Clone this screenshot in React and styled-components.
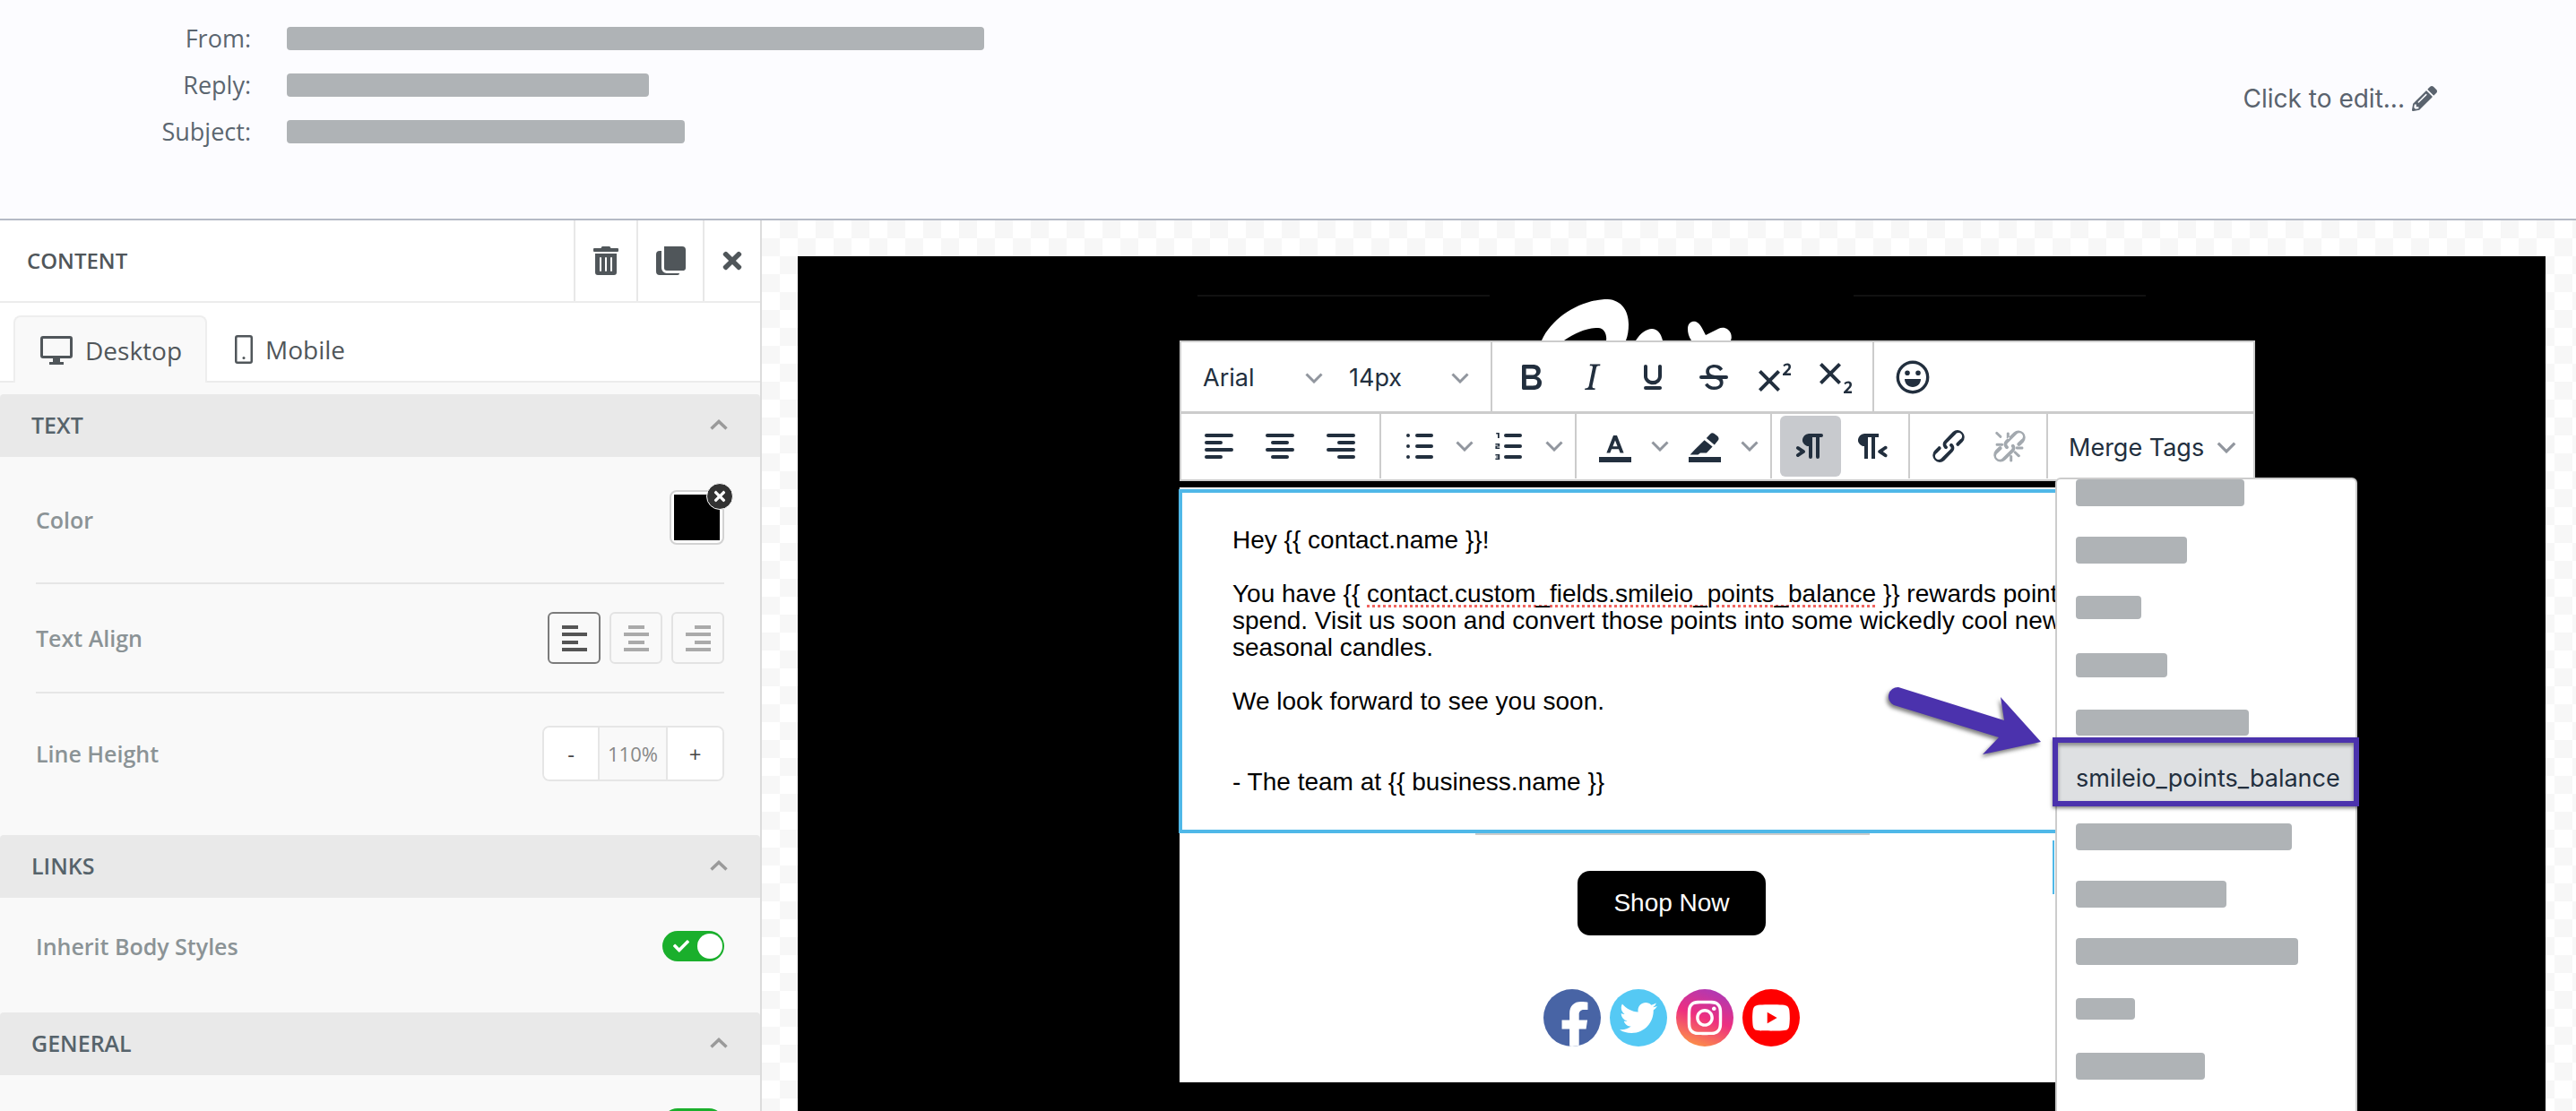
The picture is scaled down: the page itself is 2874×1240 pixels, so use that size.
import React from "react";
import styled, { createGlobalStyle } from "styled-components";
import {
  FaCheck,
  FaFacebookF,
  FaInstagram,
  FaPencilAlt,
  FaTimes,
  FaTrashAlt,
  FaTwitter,
  FaYoutube,
} from "react-icons/fa";

const GlobalStyle = createGlobalStyle`
  html, body { margin: 0; padding: 0; height: 1240px; overflow: hidden; background: #fff; }
  * { box-sizing: border-box; }
  body { font-family: "Open Sans", "Noto Sans", sans-serif; }
`;

const Page = styled.div`
  width: 2874px;
  height: 1240px;
  display: flex;
  flex-direction: column;
  overflow: hidden;
`;

/* top summary */
const Summary = styled.header`
  height: 246px;
  flex: none;
  display: flex;
  justify-content: space-between;
  align-items: flex-start;
  padding: 30px 155px 0 0;
  background: #fcfcff;
  border-bottom: 2px solid #b5bac6;
`;

const Meta = styled.div`
  display: grid;
  grid-template-columns: 280px auto;
  column-gap: 40px;
  row-gap: 26px;
  align-items: center;
`;

const MetaLabel = styled.div`
  text-align: right;
  font-size: 27px;
  line-height: 26px;
  color: #5b6670;
`;

const Redacted = styled.div`
  width: ${(p) => p.$w}px;
  height: ${(p) => p.$h || 26}px;
  background: #afb3b6;
  border-radius: 4px;
`;

const EditLink = styled.div`
  margin-top: 61px;
  display: flex;
  align-items: center;
  gap: 8px;
  font-family: "Inter", sans-serif;
  font-size: 28px;
  line-height: 38px;
  color: #5a636e;
`;

const Workspace = styled.div`
  flex: 1;
  min-height: 0;
  display: flex;
`;

/* left settings panel */
const Panel = styled.aside`
  width: 850px;
  flex: none;
  background: #f9f9f9;
  border-right: 2px solid #dcdcdc;
  overflow: hidden;
`;

const PanelHead = styled.div`
  height: 92px;
  display: flex;
  align-items: stretch;
  background: #fff;
  border-bottom: 2px solid #ececec;
`;

const PanelTitle = styled.div`
  flex: 1;
  display: flex;
  align-items: center;
  padding-left: 30px;
  padding-bottom: 2px;
  font-size: 24px;
  font-weight: 600;
  color: #50565a;
`;

const HeadButton = styled.div`
  width: ${(p) => p.$w}px;
  display: flex;
  align-items: center;
  justify-content: center;
  border-left: 2px solid #e8e8e8;
  color: #50565a;
`;

const Tabs = styled.div`
  height: 89px;
  padding: 14px 0 0 15px;
  display: flex;
  background: #fff;
  border-bottom: 2px solid #ececec;
`;

const Tab = styled.div`
  height: 75px;
  width: ${(p) => p.$w}px;
  display: flex;
  align-items: center;
  padding-left: ${(p) => p.$pad}px;
  gap: 14px;
  font-size: 28px;
  color: #50565a;
  border-radius: 8px 8px 0 0;
  ${(p) =>
    p.$active &&
    `background: #f9f9f9; border: 2px solid #eeeeee; border-bottom: 0;`}
`;

const SectionHead = styled.div`
  height: 70px;
  margin-top: ${(p) => p.$mt || 0}px;
  display: flex;
  align-items: center;
  justify-content: space-between;
  padding: 0 36px 2px 35px;
  background: #e9e9e9;
  border-radius: 4px 4px 0 0;
  font-size: 25px;
  font-weight: 600;
  color: #56636b;
`;

const Row = styled.div`
  margin: 0 40px;
  height: ${(p) => p.$h}px;
  padding-top: ${(p) => p.$top || 0}px;
  display: flex;
  justify-content: space-between;
  align-items: ${(p) => (p.$top ? "flex-start" : "center")};
  ${(p) => p.$line && `border-bottom: 2px solid #e6e6e6;`}
`;

const RowLabel = styled.div`
  font-size: 25px;
  font-weight: 600;
  line-height: ${(p) => p.$lh || 34}px;
  color: #8b9396;
`;

const Swatch = styled.div`
  position: relative;
  width: 61px;
  height: 61px;
  padding: 3px;
  background: #fff;
  border: 2px solid #d2d2d2;
  border-radius: 8px;
  margin-top: -5px;
  &::before {
    content: "";
    display: block;
    width: 100%;
    height: 100%;
    background: #000;
  }
`;

const SwatchClear = styled.div`
  position: absolute;
  top: -10px;
  right: -12px;
  width: 30px;
  height: 30px;
  border-radius: 50%;
  background: #333;
  border: 1px solid #fff;
  display: flex;
  align-items: center;
  justify-content: center;
  color: #fff;
`;

const AlignGroup = styled.div`
  display: flex;
  gap: 10px;
`;

const AlignBtn = styled.div`
  width: 59px;
  height: 58px;
  display: flex;
  align-items: center;
  justify-content: center;
  border: 2px solid ${(p) => (p.$active ? "#7b7b7b" : "#e3e3e3")};
  border-radius: 6px;
  color: ${(p) => (p.$active ? "#555" : "#aaa")};
`;

const Stepper = styled.div`
  display: flex;
  height: 62px;
  border: 2px solid #e6e6e6;
  border-radius: 8px;
  overflow: hidden;
`;

const StepCell = styled.div`
  width: ${(p) => p.$w}px;
  display: flex;
  align-items: center;
  justify-content: center;
  background: ${(p) => (p.$value ? "#f9f9f9" : "#fff")};
  color: ${(p) => (p.$value ? "#888" : "#444")};
  font-size: ${(p) => (p.$value ? 22 : 24)}px;
  & + & { border-left: 2px solid #e6e6e6; }
`;

const Toggle = styled.div`
  width: 69px;
  height: 34px;
  border-radius: 17px;
  background: #1aaf2c;
  display: flex;
  align-items: center;
  justify-content: space-between;
  padding: 0 2px 0 12px;
  color: #fff;
  &::after {
    content: "";
    width: 28px;
    height: 28px;
    border-radius: 50%;
    background: #fff;
  }
`;

/* canvas */
const Canvas = styled.main`
  flex: 1;
  min-width: 0;
  overflow: hidden;
  padding: 40px 34px 0 40px;
  background: repeating-conic-gradient(#f7f7f7 0 25%, #fff 0 50%) 0 0 / 40px 40px;
`;

const EmailFrame = styled.div`
  height: 100%;
  background: #000;
  display: flex;
  justify-content: center;
`;

const EmailColumn = styled.div`
  position: relative;
  width: 1098px;
`;

const RuleRow = styled.div`
  height: 48px;
  padding: 43px 0 0 20px;
  display: flex;
  gap: 406px;
`;

const Rule = styled.div`
  width: 326px;
  height: 2px;
  background: #111;
`;

const LogoMark = styled.svg`
  display: block;
  margin-left: 394px;
`;

const Toolbar = styled.div`
  width: 1200px;
  height: 157px;
  background: #fff;
  border: 2px solid #ccc;
  display: flex;
  flex-direction: column;
`;

const ToolRow = styled.div`
  height: ${(p) => p.$h}px;
  display: flex;
  & + & { border-top: 3px solid #ccc; }
`;

const ToolGroup = styled.div`
  width: ${(p) => p.$w}px;
  flex: ${(p) => (p.$w ? "none" : 1)};
  display: flex;
  align-items: center;
  padding: 0 ${(p) => p.$pad ?? 9}px;
  border-right: ${(p) => (p.$w ? "2px solid #ccc" : "0")};
`;

const ToolBtn = styled.div`
  width: 68px;
  height: 68px;
  flex: none;
  display: flex;
  align-items: center;
  justify-content: center;
  border-radius: 6px;
  color: ${(p) => (p.$off ? "#a3a9af" : "#222f3e")};
  ${(p) => p.$active && `background: #c8cace;`}
`;

const ChevBtn = styled.div`
  width: 32px;
  height: 68px;
  flex: none;
  display: flex;
  align-items: center;
  justify-content: center;
`;

const FontSelect = styled.div`
  width: 163px;
  flex: none;
  display: flex;
  align-items: center;
  justify-content: space-between;
  padding: 2px 13px 0 16px;
  font-family: "Inter", sans-serif;
  font-size: 27px;
  color: #222f3e;
`;

const MergeBtn = styled(FontSelect)`
  width: auto;
  gap: 14px;
  padding: 2px 0 0 14px;
`;

const EmailBody = styled.div`
  margin-top: 7px;
  padding-top: 2px;
  background: #fff;
  height: 664px;
`;

const Editor = styled.div`
  margin-left: -1px;
  height: 384px;
  padding: 38px 0 0 56px;
  border: 4px solid #4fb8e8;
  border-right: 0;
  font-family: "Liberation Sans", Arial, sans-serif;
  font-size: 28px;
  line-height: 30px;
  color: #000;
  white-space: nowrap;
  overflow: hidden;
`;

const Para = styled.p`
  margin: 0 0 ${(p) => p.$after || 30}px;
`;

const Spell = styled.span`
  text-decoration: underline dotted #f0645f 3px;
  text-underline-offset: 3px;
`;

const EditorEdge = styled.div`
  width: 440px;
  height: 2px;
  margin-left: 330px;
  background: #ccc;
`;

const ShopButton = styled.div`
  width: 210px;
  height: 72px;
  margin: 40px auto 60px;
  background: #000;
  color: #fff;
  border-radius: 14px;
  display: flex;
  align-items: center;
  justify-content: center;
  font-family: "Liberation Sans", Arial, sans-serif;
  font-size: 28px;
`;

const Socials = styled.div`
  display: flex;
  justify-content: center;
  gap: 10px;
`;

const SocialDot = styled.div`
  width: 64px;
  height: 64px;
  border-radius: 50%;
  overflow: hidden;
  background: ${(p) => p.$bg};
  color: #fff;
  display: flex;
  align-items: ${(p) => p.$align || "center"};
  justify-content: center;
`;

const FacebookGlyph = styled(FaFacebookF)`
  margin: 0 0 -4px 6px;
`;

const EditCaret = styled.div`
  position: absolute;
  left: 974px;
  top: 652px;
  width: 2px;
  height: 60px;
  background: #4fb8e8;
`;

/* merge tag menu */
const TagMenu = styled.div`
  position: absolute;
  left: 977px;
  top: 247px;
  width: 337px;
  height: 760px;
  background: #fff;
  border: 2px solid #ccc;
  border-radius: 6px;
  overflow: hidden;
`;

const TagList = styled.div`
  margin-top: -17px;
`;

const TagItem = styled.div`
  height: 64px;
  padding-left: 21px;
  display: flex;
  align-items: center;
`;

const PickBox = styled.div`
  position: absolute;
  left: 974px;
  top: 537px;
  width: 342px;
  height: 77px;
  padding: 13px 0 0 20px;
  display: flex;
  align-items: center;
  background: #dee0e2;
  border: 6px solid #4b32ad;
  box-shadow: 0 2px 4px rgba(0, 0, 0, 0.5), inset 0 3px 4px rgba(0, 0, 0, 0.4);
  font-family: "Inter", sans-serif;
  font-size: 27px;
  color: #222f3e;
`;

const Arrow = styled.svg`
  position: absolute;
  left: 784px;
  top: 474px;
  filter: drop-shadow(-2px 3px 2px rgba(0, 0, 0, 0.5));
`;

const Icon = ({ d, fill = "currentColor" }) => (
  <svg width="48" height="48" viewBox="0 0 24 24" fill={fill} fillRule="evenodd">
    {[].concat(d).map((path) => (
      <path key={path} d={path} />
    ))}
  </svg>
);

const Chevron = ({ color = "#91969e", w = 20, h = 12 }) => (
  <svg width={w} height={h} viewBox="0 0 20 12" fill="none" stroke={color} strokeWidth="3">
    <path d="M1.5 1.5 10 10l8.5-8.5" />
  </svg>
);

const ChevronUp = () => (
  <svg width="20" height="12" viewBox="0 0 20 12" fill="none" stroke="#9a9a9a" strokeWidth="3.5">
    <path d="M1.5 10.5 10 2.5l8.5 8" />
  </svg>
);

const bar = (x, y, w) =>
  `M${x + 1} ${y - 1}h${w - 2}a1 1 0 0 1 0 2h-${w - 2}a1 1 0 0 1 0-2z`;

const icons = {
  bold: "M7.8 19c-.3 0-.5 0-.6-.2l-.2-.5V5.7c0-.2 0-.4.2-.5l.6-.2h5c1.5 0 2.7.3 3.5 1 .7.6 1.1 1.4 1.1 2.5a3 3 0 0 1-.6 1.9c-.4.6-1 1-1.6 1.2.4.1.9.3 1.3.6s.8.7 1 1.2c.4.4.5 1 .5 1.6 0 1.3-.4 2.3-1.3 3-.8.7-2.1 1-3.8 1H7.8zm5-8.3c.6 0 1.2-.1 1.6-.5.4-.3.6-.7.6-1.3 0-1.1-.8-1.7-2.3-1.7H9.3v3.5h3.5zm.5 6c.7 0 1.3-.1 1.7-.4.4-.4.6-.9.6-1.5s-.2-1-.7-1.4c-.4-.3-1-.4-2-.4H9.4v3.8h4z",
  italic: "M16.7 4.7l-.1.9h-.3c-.6 0-1 0-1.4.3-.3.3-.4.6-.5 1.1l-2.1 9.8v.6c0 .5.4.8 1.4.8h.2l-.2.8H8l.2-.8h.2c1.1 0 1.8-.5 2-1.5l2-9.8.1-.5c0-.6-.4-.8-1.4-.8h-.3l.2-.9h5.8z",
  underline: "M16 5c.6 0 1 .4 1 1v5.5a4 4 0 0 1-.4 1.8l-1 1.4a5.3 5.3 0 0 1-5.5 1 5 5 0 0 1-1.6-1c-.5-.4-.8-.9-1.1-1.4a4 4 0 0 1-.4-1.8V6c0-.6.4-1 1-1s1 .4 1 1v5.5c0 .3 0 .6.2 1l.6.7a3.3 3.3 0 0 0 2.2.8 3.4 3.4 0 0 0 2.2-.8c.3-.2.4-.5.6-.8l.2-.9V6c0-.6.4-1 1-1zM8 17h8c.6 0 1 .4 1 1s-.4 1-1 1H8a1 1 0 0 1 0-2z",
  strike: [
    "M15.6 8.5c-.5-.7-1-1.1-1.3-1.3-.6-.4-1.3-.6-2-.6-2.7 0-2.8 1.7-2.8 2.1 0 1.6 1.8 2 3.2 2.3 4.4.9 4.6 2.8 4.6 3.9 0 1.4-.7 4.1-5 4.1A6.2 6.2 0 0 1 7 16.4l1.5-1.1c.4.6 1.6 2 3.7 2 1.6 0 2.5-.4 3-1.2.4-.8.3-2-.8-2.6-.7-.4-1.6-.7-2.9-1-1-.2-3.9-.8-3.9-3.6C7.6 6 10.3 5 12.4 5c2.9 0 4.2 1.6 4.7 2.4l-1.5 1.1z",
    "M5 11h14a1 1 0 0 1 0 2H5a1 1 0 0 1 0-2z",
  ],
  superscript: "M15 9.4 10.4 14l4.6 4.6-1.4 1.4L9 15.4 4.4 20 3 18.6 7.6 14 3 9.4 4.4 8 9 12.6 13.6 8 15 9.4zM21 11h-4.5v-.9l2.3-2.4c.6-.6.9-1.1.9-1.5 0-.5-.3-.8-.8-.8-.5 0-1 .2-1.6.7l-.6-.8c.7-.6 1.5-1 2.4-1 1.1 0 1.9.7 1.9 1.8 0 .8-.4 1.5-1.2 2.3l-1.2 1.3H21V11z",
  subscript: "M10.4 10 15 14.6 13.6 16 9 11.4 4.4 16 3 14.6 7.6 10 3 5.4 4.4 4 9 8.6 13.6 4 15 5.4 10.4 10zM21 21h-4.5v-.9l2.3-2.4c.6-.6.9-1.1.9-1.5 0-.5-.3-.8-.8-.8-.5 0-1 .2-1.6.7l-.6-.8c.7-.6 1.5-1 2.4-1 1.1 0 1.9.7 1.9 1.8 0 .8-.4 1.5-1.2 2.3l-1.2 1.3H21V21z",
  smile: "M12 2.800a9.200 9.200 0 1 1 0 18.400 9.200 9.200 0 0 1 0-18.400zm0 1.700a7.500 7.500 0 1 0 0 15 7.500 7.500 0 0 0 0-15zM9 8.200a1.400 1.400 0 1 1 0 2.800 1.400 1.400 0 0 1 0-2.800zm6 0a1.400 1.400 0 1 1 0 2.800 1.400 1.400 0 0 1 0-2.800zM7.500 13h9c0 2.600-2 4.500-4.500 4.500S7.500 15.600 7.500 13z",
  alignLeft: [bar(4, 6, 16), bar(4, 10, 10), bar(4, 14, 16), bar(4, 18, 10)],
  alignCenter: [bar(4, 6, 16), bar(7, 10, 10), bar(4, 14, 16), bar(7, 18, 10)],
  alignRight: [bar(4, 6, 16), bar(10, 10, 10), bar(4, 14, 16), bar(10, 18, 10)],
  bullets: [
    "M5.500 5a1 1 0 1 1 0 2 1 1 0 0 1 0-2zm0 6a1 1 0 1 1 0 2 1 1 0 0 1 0-2zm0 6a1 1 0 1 1 0 2 1 1 0 0 1 0-2z",
    bar(9.5, 6, 10),
    bar(9.5, 12, 10),
    bar(9.5, 18, 10),
  ],
  numbers: [
    "M4.600 4.500h1.800v3h-.9V5.200h-.9z",
    "M4.200 10.500h2.400v1.800H5.100v.5h1.500v.7H4.200v-1.800h1.500v-.5H4.200z",
    "M4.200 16.500h2.400v3H4.200v-.7h1.500v-.5H4.600v-.6h1.100v-.5H4.200z",
    bar(9, 6, 10),
    bar(9, 12, 10),
    bar(9, 18, 10),
  ],
  textColor: "M3 18h18v3H3zM11 6h2l3.800 9.800h-2l-.8-2.200h-4l-.8 2.200h-2zm1 2.800-1.300 3.300h2.600z",
  marker: [
    "M3 18h18v3H3z",
    "M15 5.200c.7-.7 1.600-.7 2.300-.2l1.800 1.400c.8.700.9 1.700.3 2.400l-2 2.400-4.500-3.700zM11.800 8.600l4.500 3.700-3.300 3.500H9.500l-1.300 1H3.800l2.900-3.200.4-.4z",
  ],
  ltr: "M11 5h7a1 1 0 0 1 0 2h-1v11a1 1 0 0 1-2 0V7h-2v11a1 1 0 0 1-2 0v-6c-.5 0-1 0-1.400-.3A3.400 3.400 0 0 1 7.800 10a3.300 3.300 0 0 1 0-2.800 3.400 3.400 0 0 1 1.800-1.800L11 5zM4.400 16.200 6.200 15l-1.800-1.200a1 1 0 0 1 1.200-1.600l3 2a1 1 0 0 1 0 1.600l-3 2a1 1 0 1 1-1.200-1.600z",
  rtl: "M8 5h8v2h-2v12h-2V7h-2v12H8v-7c-.5 0-1 0-1.400-.3A3.400 3.400 0 0 1 4.800 10a3.300 3.300 0 0 1 0-2.800 3.400 3.400 0 0 1 1.800-1.800L8 5zm12 11.200a1 1 0 1 1-1 1.600l-3-2a1 1 0 0 1 0-1.600l3-2a1 1 0 1 1 1 1.600L18.400 15l1.800 1.200z",
  link: "M6.200 12.300a1 1 0 0 1 1.400 1.400l-2 2a2 2 0 1 0 2.600 2.800l4.800-4.800a1 1 0 0 0 0-1.400 1 1 0 1 1 1.400-1.300 2.900 2.900 0 0 1 0 4L9.600 20a3.900 3.900 0 0 1-5.500-5.500l2-2zm11.600-.6a1 1 0 0 1-1.400-1.400l2-2a2 2 0 1 0-2.600-2.800L11 10.300a1 1 0 0 0 0 1.400A1 1 0 1 1 9.600 13a2.900 2.900 0 0 1 0-4L14.400 4a3.900 3.900 0 0 1 5.500 5.500l-2 2z",
  unlink: "M6.200 12.300a1 1 0 0 1 1.400 1.400l-2.100 2a2 2 0 1 0 2.700 2.800l4.800-4.800a1 1 0 0 0 0-1.400 1 1 0 0 1 1.400-1.300 2.900 2.900 0 0 1 0 4.100l-4.800 4.700a3.900 3.900 0 0 1-5.500-5.500l2-2zm11.600-.6a1 1 0 0 1-1.400-1.400l2.100-2a2 2 0 1 0-2.700-2.800L11 10.300a1 1 0 0 0 0 1.400A1 1 0 1 1 9.600 13a2.900 2.900 0 0 1 0-4.100l4.800-4.700a3.900 3.900 0 0 1 5.500 5.500l-2 2zM7.600 6.300a.8.8 0 0 1-1 1.100L4.700 5.500a.8.8 0 1 1 1-1l2 1.900zm-.1 4.100a.8.8 0 1 1 0 1.500H4.800a.8.8 0 0 1 0-1.500h2.700zm9 3.300a.8.8 0 1 1 0-1.500h2.700a.8.8 0 0 1 0 1.500h-2.700zm-.1 4-2-2a.8.8 0 0 1 1-1l2 1.900a.8.8 0 1 1-1 1zM10.400 4.800a.8.8 0 0 1 1.500 0v2.700a.8.8 0 0 1-1.500 0V4.800zm3.200 15.400a.8.8 0 0 1-1.500 0v-2.700a.8.8 0 0 1 1.500 0v2.700z",
};

const CopyIcon = () => (
  <svg width="33" height="32" viewBox="0 0 33 32" fill="currentColor">
    <path d="M9 0h20a4 4 0 0 1 4 4v20a3 3 0 0 1-3 3H12a3 3 0 0 1-3-3z" />
    <path d="M6 5v19a6 6 0 0 0 6 6h14v0a2 2 0 0 1-2 2H4a4 4 0 0 1-4-4V9a4 4 0 0 1 4-4z" />
  </svg>
);

const DesktopIcon = () => (
  <svg width="36" height="32" viewBox="0 0 36 32" fill="currentColor">
    <path d="M3 0h30a3 3 0 0 1 3 3v19a3 3 0 0 1-3 3H3a3 3 0 0 1-3-3V3a3 3 0 0 1 3-3zm0 3v19h30V3z" fillRule="evenodd" />
    <path d="M14 25h8v4h4v3H10v-3h4z" />
  </svg>
);

const MobileIcon = () => (
  <svg width="20" height="32" viewBox="0 0 20 32" fill="currentColor">
    <path d="M3 0h14a3 3 0 0 1 3 3v26a3 3 0 0 1-3 3H3a3 3 0 0 1-3-3V3a3 3 0 0 1 3-3zm0 2.500a.5.5 0 0 0-.5.5v26a.5.5 0 0 0 .5.5h14a.5.5 0 0 0 .5-.5V3a.5.5 0 0 0-.5-.5z" fillRule="evenodd" />
    <circle cx="10" cy="25.500" r="1.500" />
  </svg>
);

const AlignLines = ({ offsets }) => (
  <svg width="28" height="30" viewBox="0 0 28 30" fill="currentColor">
    <rect x={offsets[0]} y="1" width="18" height="4" />
    <rect x="0" y="9" width="28" height="4" />
    <rect x={offsets[1]} y="18" width="18" height="4" />
    <rect x="0" y="26" width="28" height="4" />
  </svg>
);

const tagBars = [
  [188, 30],
  [124, 30],
  [73, 26],
  [102, 27],
  [193, 29],
  null,
  [241, 30],
  [168, 30],
  [248, 30],
  [66, 24],
  [144, 30],
];

const App = () => {
  return (
    <Page>
      <GlobalStyle />
      <Summary>
        <Meta>
          <MetaLabel>From:</MetaLabel>
          <Redacted $w={778} />
          <MetaLabel>Reply:</MetaLabel>
          <Redacted $w={404} />
          <MetaLabel>Subject:</MetaLabel>
          <Redacted $w={444} />
        </Meta>
        <EditLink>
          Click to edit...
          <FaPencilAlt size={28} />
        </EditLink>
      </Summary>

      <Workspace>
        <Panel>
          <PanelHead>
            <PanelTitle>CONTENT</PanelTitle>
            <HeadButton $w={70}>
              <FaTrashAlt size={32} />
            </HeadButton>
            <HeadButton $w={74}>
              <CopyIcon />
            </HeadButton>
            <HeadButton $w={64}>
              <FaTimes size={30} />
            </HeadButton>
          </PanelHead>
          <Tabs>
            <Tab $active $w={216} $pad={28}>
              <DesktopIcon />
              Desktop
            </Tab>
            <Tab $w={180} $pad={31}>
              <MobileIcon />
              Mobile
            </Tab>
          </Tabs>

          <SectionHead $mt={13}>
            TEXT
            <ChevronUp />
          </SectionHead>
          <Row $h={142} $line>
            <RowLabel>Color</RowLabel>
            <Swatch>
              <SwatchClear>
                <FaTimes size={18} />
              </SwatchClear>
            </Swatch>
          </Row>
          <Row $h={122} $line>
            <RowLabel>Text Align</RowLabel>
            <AlignGroup>
              <AlignBtn $active>
                <AlignLines offsets={[0, 0]} />
              </AlignBtn>
              <AlignBtn>
                <AlignLines offsets={[5, 5]} />
              </AlignBtn>
              <AlignBtn>
                <AlignLines offsets={[10, 10]} />
              </AlignBtn>
            </AlignGroup>
          </Row>
          <Row $h={158} $top={36}>
            <RowLabel $lh={62}>Line Height</RowLabel>
            <Stepper>
              <StepCell $w={60}>-</StepCell>
              <StepCell $w={76} $value>
                110%
              </StepCell>
              <StepCell $w={63}>+</StepCell>
            </Stepper>
          </Row>

          <SectionHead>
            LINKS
            <ChevronUp />
          </SectionHead>
          <Row $h={128} $top={37}>
            <RowLabel>Inherit Body Styles</RowLabel>
            <Toggle>
              <FaCheck size={18} />
            </Toggle>
          </Row>

          <SectionHead>
            GENERAL
            <ChevronUp />
          </SectionHead>
          <Row $h={128} $top={37}>
            <RowLabel />
            <Toggle>
              <FaCheck size={18} />
            </Toggle>
          </Row>
        </Panel>

        <Canvas>
          <EmailFrame>
            <EmailColumn>
              <RuleRow>
                <Rule />
                <Rule />
              </RuleRow>
              <LogoMark width="240" height="46" viewBox="0 0 240 46" fill="#fff">
                <path
                  fillRule="evenodd"
                  d="M10 46C22 20 52 2 80 0c18-1 27 12 27 28 0 7-1 13-3 18H82c1-6-2-14-9-14-13 0-26 6-38 14z"
                />
                <path d="M115 46c5-8 12-13 18-13 6 0 10 5 12 13z" />
                <path d="M177 46c-3-4-4-9-4-13 0-7 5-9 9-8 5 2 8 9 11 15l14-7c6-3 12 0 14 5 1 3 1 6 0 8z" />
              </LogoMark>

              <Toolbar>
                <ToolRow $h={77}>
                  <ToolGroup $w={347} $pad={8}>
                    <FontSelect>
                      Arial <Chevron />
                    </FontSelect>
                    <FontSelect>
                      14px <Chevron />
                    </FontSelect>
                  </ToolGroup>
                  <ToolGroup $w={426}>
                    <ToolBtn><Icon d={icons.bold} /></ToolBtn>
                    <ToolBtn><Icon d={icons.italic} /></ToolBtn>
                    <ToolBtn><Icon d={icons.underline} /></ToolBtn>
                    <ToolBtn><Icon d={icons.strike} /></ToolBtn>
                    <ToolBtn><Icon d={icons.superscript} /></ToolBtn>
                    <ToolBtn><Icon d={icons.subscript} /></ToolBtn>
                  </ToolGroup>
                  <ToolGroup>
                    <ToolBtn><Icon d={icons.smile} /></ToolBtn>
                  </ToolGroup>
                </ToolRow>
                <ToolRow $h={75}>
                  <ToolGroup $w={223} $pad={8}>
                    <ToolBtn><Icon d={icons.alignLeft} /></ToolBtn>
                    <ToolBtn><Icon d={icons.alignCenter} /></ToolBtn>
                    <ToolBtn><Icon d={icons.alignRight} /></ToolBtn>
                  </ToolGroup>
                  <ToolGroup $w={218}>
                    <ToolBtn><Icon d={icons.bullets} /></ToolBtn>
                    <ChevBtn><Chevron /></ChevBtn>
                    <ToolBtn><Icon d={icons.numbers} /></ToolBtn>
                    <ChevBtn><Chevron /></ChevBtn>
                  </ToolGroup>
                  <ToolGroup $w={218}>
                    <ToolBtn><Icon d={icons.textColor} /></ToolBtn>
                    <ChevBtn><Chevron /></ChevBtn>
                    <ToolBtn><Icon d={icons.marker} /></ToolBtn>
                    <ChevBtn><Chevron /></ChevBtn>
                  </ToolGroup>
                  <ToolGroup $w={154}>
                    <ToolBtn $active><Icon d={icons.ltr} /></ToolBtn>
                    <ToolBtn><Icon d={icons.rtl} /></ToolBtn>
                  </ToolGroup>
                  <ToolGroup $w={154}>
                    <ToolBtn><Icon d={icons.link} /></ToolBtn>
                    <ToolBtn $off><Icon d={icons.unlink} /></ToolBtn>
                  </ToolGroup>
                  <ToolGroup>
                    <MergeBtn>
                      Merge Tags <Chevron w={22} h={13} />
                    </MergeBtn>
                  </ToolGroup>
                </ToolRow>
              </Toolbar>

              <EmailBody>
                <Editor>
                  <Para>Hey {"{{"} contact.name {"}}"}!</Para>
                  <Para>
                    You have {"{{"} <Spell>contact.custom_fields.smileio_points_balance</Spell> {"}}"} rewards points to
                    <br />
                    spend. Visit us soon and convert those points into some wickedly cool new
                    <br />
                    seasonal candles.
                  </Para>
                  <Para $after={60}>We look forward to see you soon.</Para>
                  <Para>- The team at {"{{"} business.name {"}}"}</Para>
                </Editor>
                <EditorEdge />
                <ShopButton>Shop Now</ShopButton>
                <Socials>
                  <SocialDot $bg="#4864a5" $align="flex-end">
                    <FacebookGlyph size={54} />
                  </SocialDot>
                  <SocialDot $bg="#55c9f4">
                    <FaTwitter size={42} />
                  </SocialDot>
                  <SocialDot $bg="linear-gradient(200deg, #a03bc0 0%, #ee2f80 50%, #ffa63c 100%)">
                    <FaInstagram size={44} />
                  </SocialDot>
                  <SocialDot $bg="#ff0000">
                    <FaYoutube size={44} />
                  </SocialDot>
                </Socials>
              </EmailBody>

              <EditCaret />

              <TagMenu>
                <TagList>
                  {tagBars.map((b, i) => (
                    <TagItem key={i}>{b && <Redacted $w={b[0]} $h={b[1]} />}</TagItem>
                  ))}
                </TagList>
              </TagMenu>

              <PickBox>smileio_points_balance</PickBox>

              <Arrow width="190" height="90" viewBox="0 0 190 90" fill="#4b32ad">
                <path d="M18 7 136 44l-4-26 45 50-65 14 18-19L13 27a10.500 10.500 0 0 1 5-20z" />
              </Arrow>
            </EmailColumn>
          </EmailFrame>
        </Canvas>
      </Workspace>
    </Page>
  );
};

export default App;
